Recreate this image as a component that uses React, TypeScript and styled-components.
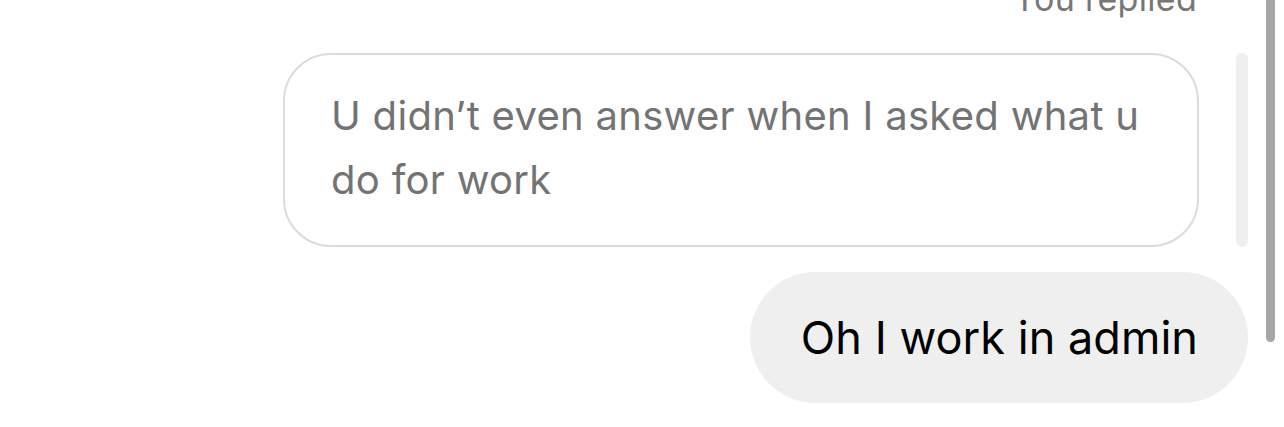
import React from "react";
import styled, { createGlobalStyle } from "styled-components";

const Global = createGlobalStyle`
  html, body { margin: 0; padding: 0; background: #ffffff; }
  body { font-family: Inter, "Noto Sans", "Liberation Sans", sans-serif; -webkit-font-smoothing: antialiased; }
`;

const Page = styled.div`
  display: flex;
  width: 1284px;
  height: 427px;
  overflow: hidden;
  background: #ffffff;
`;

const Thread = styled.div`
  flex: 1;
  display: flex;
  flex-direction: column;
  align-items: flex-end;
`;

const PageScrollbar = styled.div`
  width: 9px;
  height: 342px;
  margin: 0 9px 0 18px;
  background: #a6a6a6;
  border-radius: 0 0 5px 5px;
  flex-shrink: 0;
`;

const ReplyLabel = styled.div`
  margin-top: -21px;
  margin-right: 51px;
  font-size: 34px;
  line-height: 40px;
  color: #777777;
  letter-spacing: 0.3px;
`;

const QuoteRow = styled.div`
  display: flex;
  align-items: stretch;
  margin-top: 34px;
`;

const QuoteBubble = styled.div`
  box-sizing: border-box;
  width: 916px;
  height: 194px;
  padding: 29px 30px 0 46px;
  border: 2.5px solid #dbdbdb;
  border-radius: 48px;
  font-size: 40px;
  line-height: 64px;
  color: #737373;
  letter-spacing: 0.3px;
`;

const InnerTrack = styled.div`
  width: 12px;
  margin-left: 37px;
  background: #efefef;
  border-radius: 6px;
`;

const OwnBubble = styled.div`
  box-sizing: border-box;
  margin-top: 25px;
  height: 131px;
  display: flex;
  align-items: center;
  padding: 0 50px 0 51px;
  background: #efefef;
  border-radius: 66px;
  font-size: 45px;
  color: #000000;
  letter-spacing: 0.05px;
`;

export default function App() {
  return (
    <>
      <Global />
      <Page>
        <Thread>
          <ReplyLabel>You replied</ReplyLabel>
          <QuoteRow>
            <QuoteBubble>U didn’t even answer when I asked what u do for work</QuoteBubble>
            <InnerTrack />
          </QuoteRow>
          <OwnBubble>Oh I work in admin</OwnBubble>
        </Thread>
        <PageScrollbar />
      </Page>
    </>
  );
}
